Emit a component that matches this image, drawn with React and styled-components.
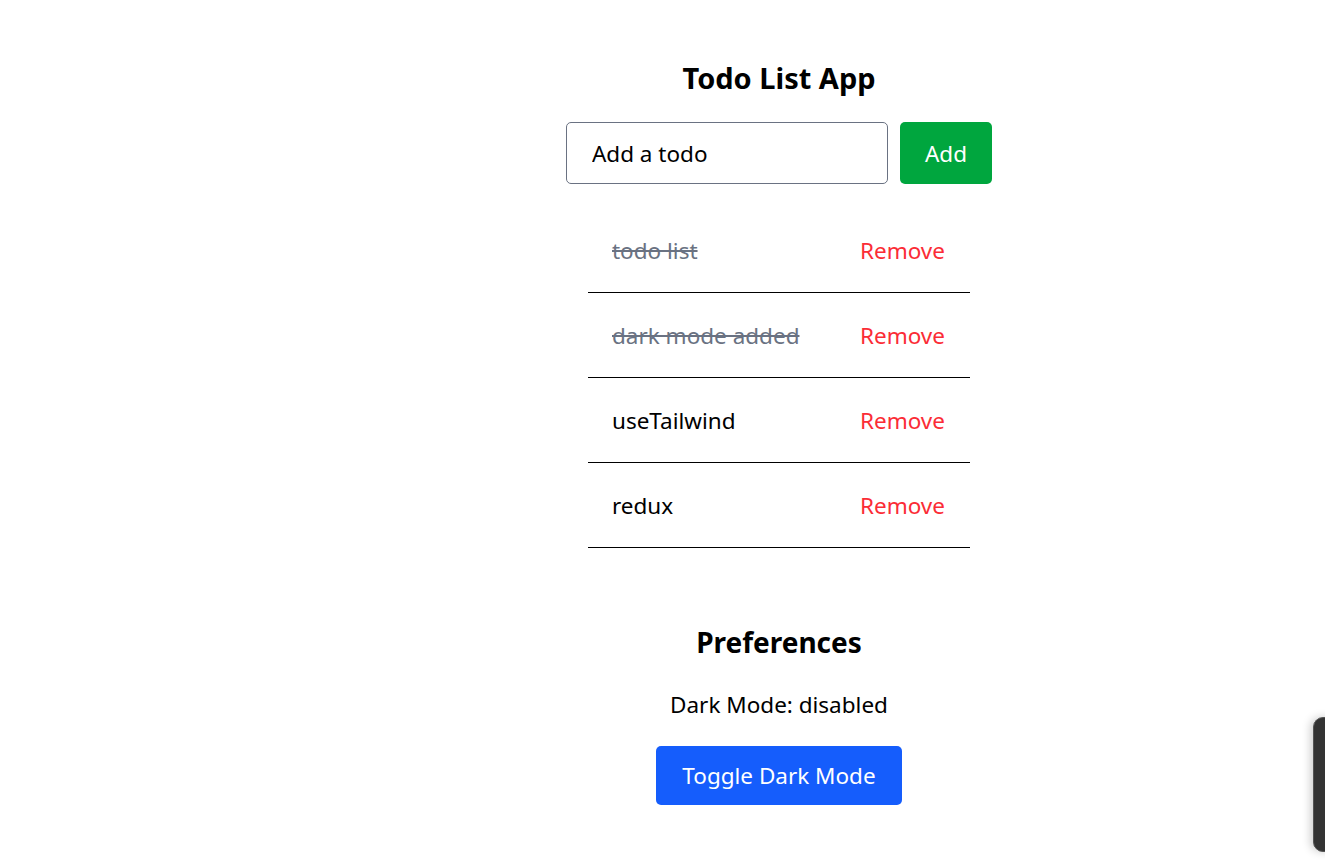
import React, { useState } from 'react';
import styled, { createGlobalStyle } from 'styled-components';

const GlobalStyle = createGlobalStyle`
  html, body {
    margin: 0;
    padding: 0;
    background: #ffffff;
    color: #000000;
    font-family: "Noto Sans", "Open Sans", sans-serif;
  }
`;

const Shell = styled.div`
  display: flex;
  justify-content: center;
  padding-left: 233px;
  min-height: 862px;
  box-sizing: border-box;
`;

const Column = styled.main`
  display: flex;
  flex-direction: column;
  align-items: center;
  padding-top: 58px;
`;

const Title = styled.h1`
  margin: 0;
  font-size: 29px;
  line-height: 40px;
  font-weight: 700;
`;

const Form = styled.form`
  display: flex;
  gap: 12px;
  margin-top: 24px;
`;

const Input = styled.input`
  width: 322px;
  height: 62px;
  box-sizing: border-box;
  border: 1px solid #6a7282;
  border-radius: 5px;
  padding: 0 25px;
  font: inherit;
  font-size: 22.5px;
  color: #000;
  outline: none;
  &::placeholder {
    color: #000;
  }
`;

const Button = styled.button`
  border: none;
  border-radius: 5px;
  color: #fff;
  font: inherit;
  font-size: 22.5px;
  cursor: pointer;
  padding: 0 ${p => p.$pad || 25}px;
  height: ${p => p.$h || 62}px;
  background: ${p => p.$color};
`;

const List = styled.ul`
  list-style: none;
  margin: 24px 0 0;
  padding: 0;
  width: 382px;
`;

const Row = styled.li`
  display: flex;
  align-items: center;
  justify-content: space-between;
  height: 85px;
  box-sizing: border-box;
  padding: 0 25px 0 24px;
  border-bottom: 1px solid #000;
  font-size: 22.5px;
`;

const Label = styled.span`
  color: ${p => (p.$done ? '#6a7282' : '#000')};
  text-decoration: ${p => (p.$done ? 'line-through' : 'none')};
  cursor: pointer;
`;

const Remove = styled.button`
  border: none;
  background: none;
  padding: 0;
  font: inherit;
  color: #fb2c36;
  cursor: pointer;
`;

const Section = styled.section`
  display: flex;
  flex-direction: column;
  align-items: center;
  margin-top: 74px;
`;

const SubTitle = styled.h2`
  margin: 0;
  font-size: 28px;
  line-height: 40px;
  font-weight: 700;
`;

const Status = styled.p`
  margin: 27px 0 25px;
  font-size: 22.5px;
  line-height: 32px;
`;

const Widget = styled.div`
  position: fixed;
  right: -22px;
  top: 717px;
  width: 32px;
  height: 133px;
  border-radius: 10px;
  background: #333333;
  border: 1px solid #555;
  box-shadow: -3px 0 8px rgba(0, 0, 0, 0.18);
`;

export default function App() {
  const [todos, setTodos] = useState([
    { id: 1, text: 'todo list', done: true },
    { id: 2, text: 'dark mode added', done: true },
    { id: 3, text: 'useTailwind', done: false },
    { id: 4, text: 'redux', done: false },
  ]);
  const [text, setText] = useState('');
  const [dark, setDark] = useState(false);

  const add = e => {
    e.preventDefault();
    if (!text.trim()) return;
    setTodos([...todos, { id: Date.now(), text, done: false }]);
    setText('');
  };

  return (
    <>
      <GlobalStyle />
      <Shell>
        <Column>
          <Title>Todo List App</Title>
          <Form onSubmit={add}>
            <Input placeholder="Add a todo" value={text} onChange={e => setText(e.target.value)} />
            <Button type="submit" $color="#00a63e">Add</Button>
          </Form>
          <List>
            {todos.map(t => (
              <Row key={t.id}>
                <Label
                  $done={t.done}
                  onClick={() => setTodos(todos.map(x => (x.id === t.id ? { ...x, done: !x.done } : x)))}
                >
                  {t.text}
                </Label>
                <Remove onClick={() => setTodos(todos.filter(x => x.id !== t.id))}>Remove</Remove>
              </Row>
            ))}
          </List>
          <Section>
            <SubTitle>Preferences</SubTitle>
            <Status>Dark Mode: {dark ? 'enabled' : 'disabled'}</Status>
            <Button $color="#155dfc" $h={59} $pad={26} onClick={() => setDark(!dark)}>
              Toggle Dark Mode
            </Button>
          </Section>
        </Column>
      </Shell>
      <Widget />
    </>
  );
}
